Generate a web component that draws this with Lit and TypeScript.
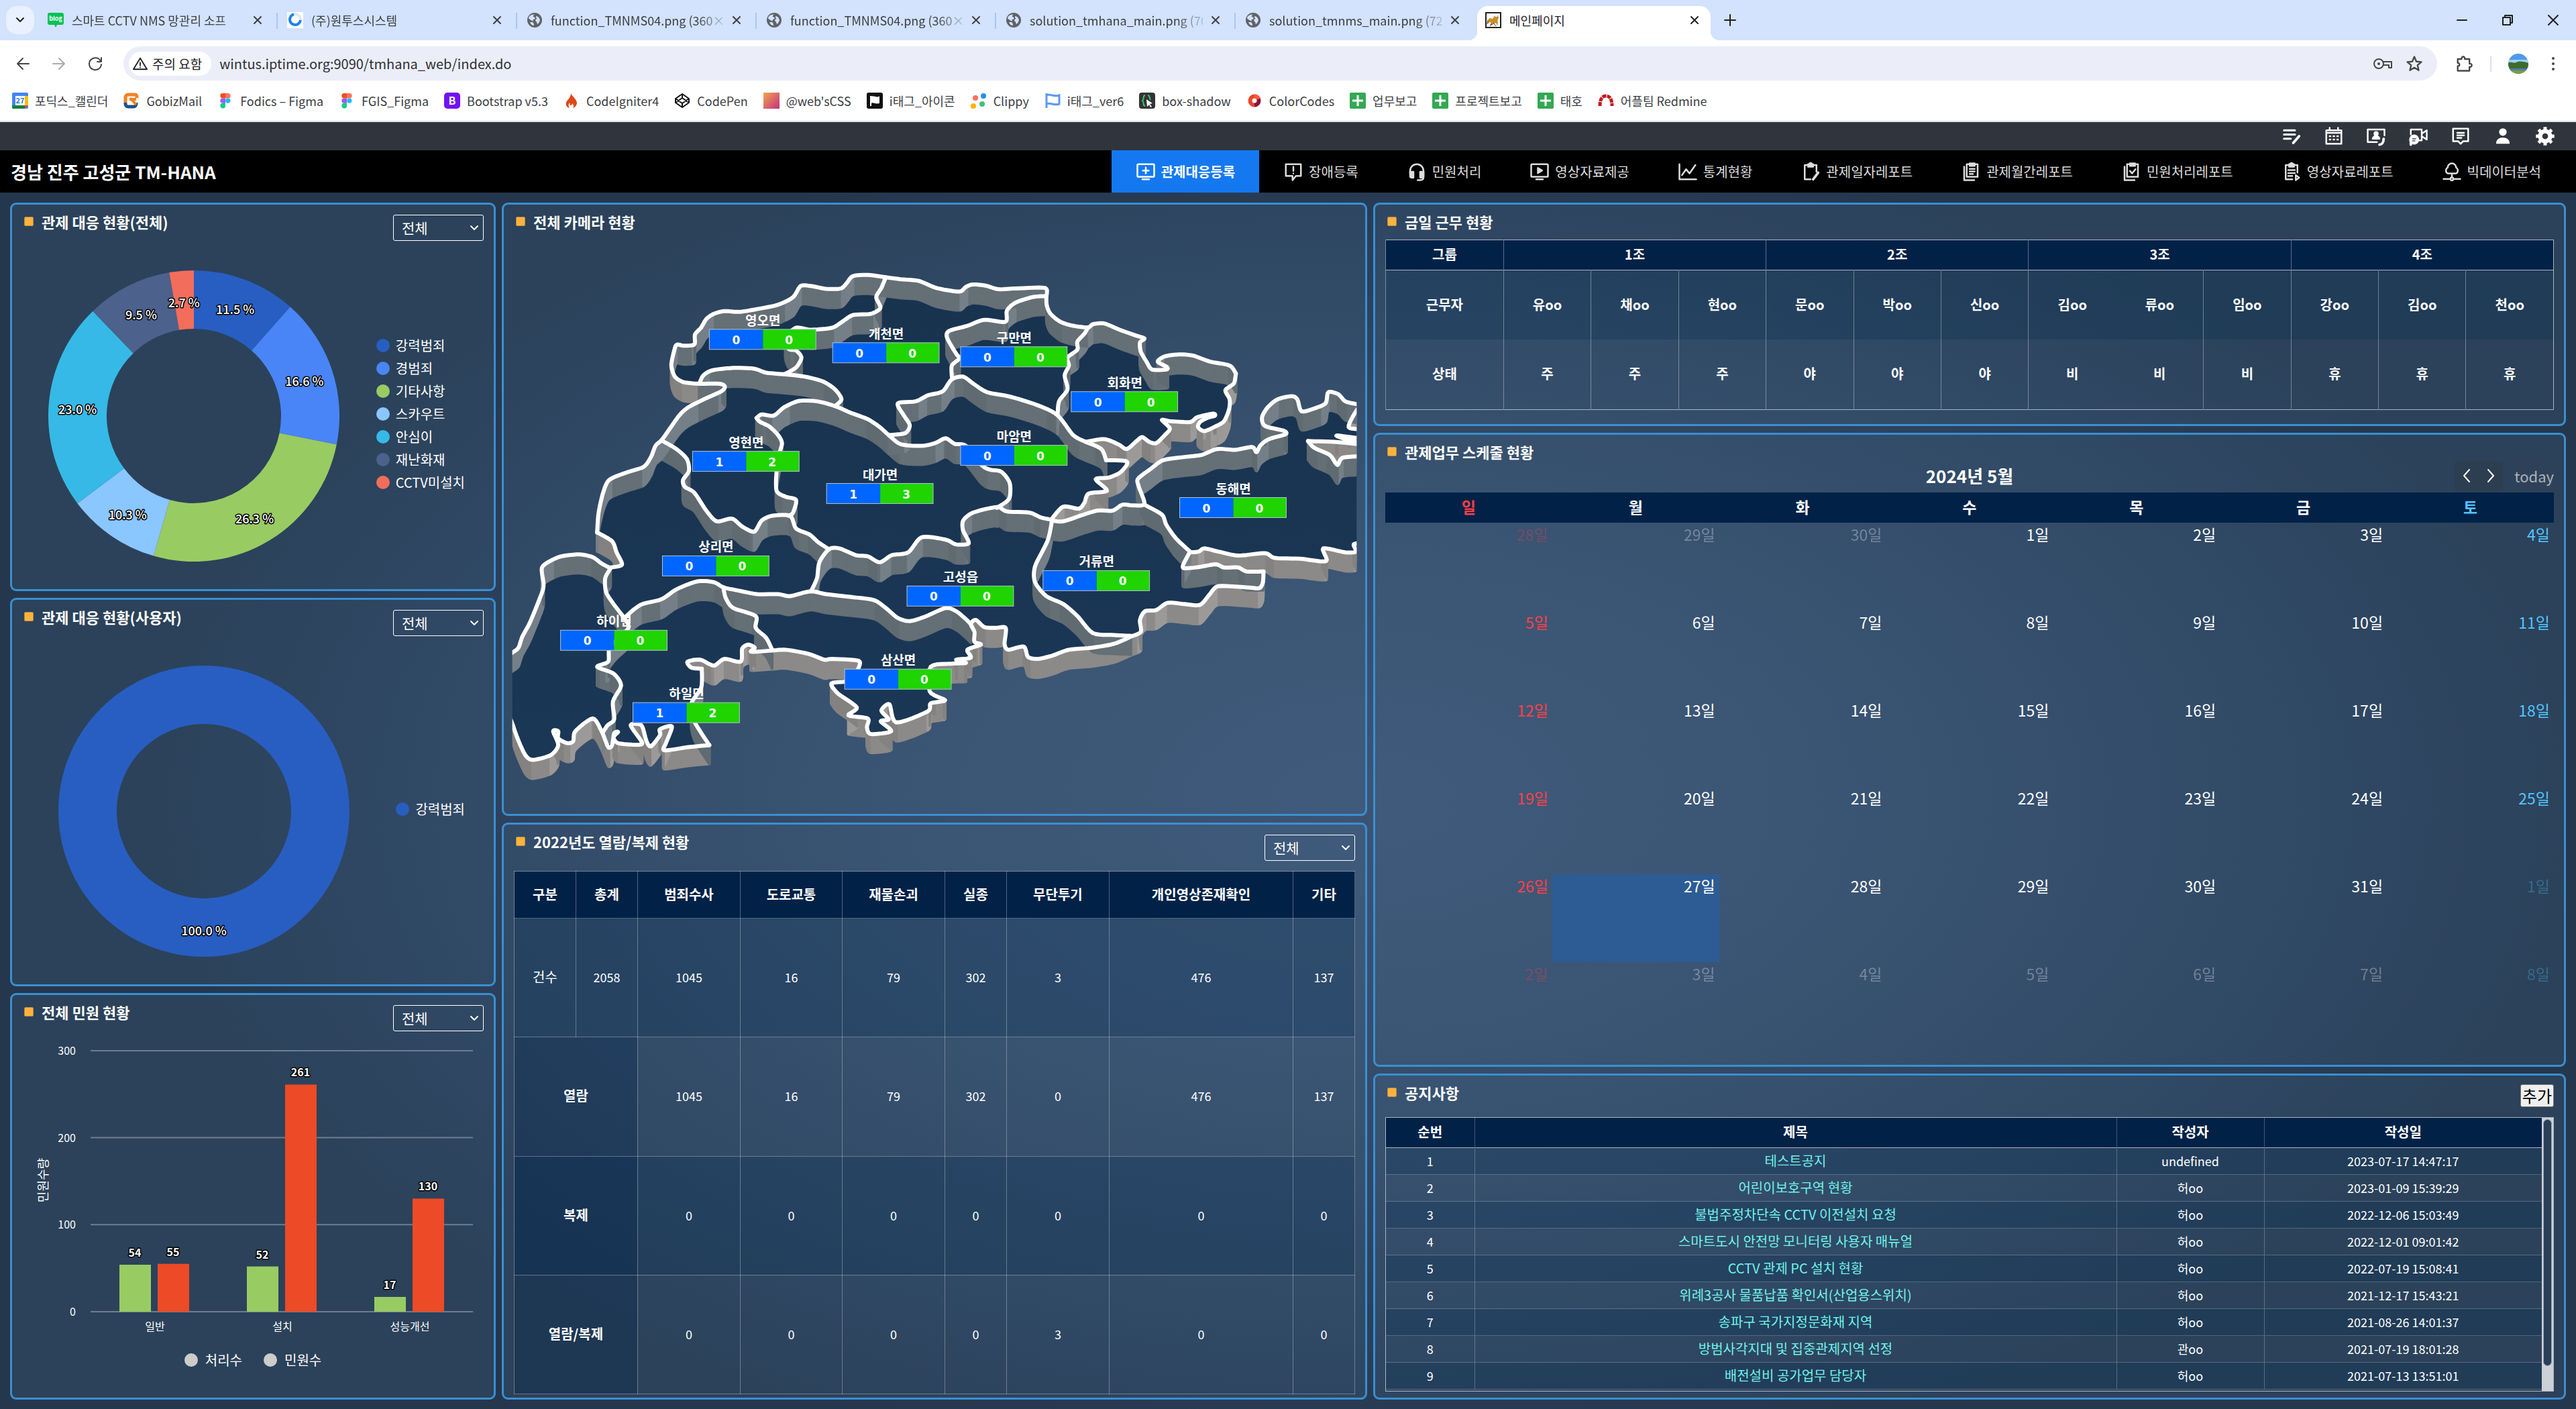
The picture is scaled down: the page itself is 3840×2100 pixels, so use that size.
import { LitElement, html, svg, css, nothing } from "lit";
import { customElement, property } from "lit/decorators.js";
import { classMap } from "lit/directives/class-map.js";

const base = css`
  * { box-sizing: border-box; }
  button, select, input { font: inherit; color: inherit; margin: 0; }
  a { color: inherit; text-decoration: none; }
  ul { list-style: none; margin: 0; padding: 0; }
  svg { display: block; }
  .icon { flex: none; fill: none; stroke: currentColor; stroke-width: 2; stroke-linecap: round; stroke-linejoin: round; }
  .solid { fill: currentColor; stroke: none; }
`;

/* ---------- Browser frame ---------- */

const globe = html`<svg class="fav" viewBox="0 0 24 24"><circle cx="12" cy="12" r="11" fill="#5f6368"/><path d="M12 3.500c-2 1-3 3-1 4 2 0 2 2 1 3-2 0-3 1-2 3l-3-1-4-3c0-3 3-6 9-6zM14 6c3 0 5 2 6 6-1 3-2 5-4 6-1-2 0-3-2-4-2-2 0-4 2-4-2-1-2-2-2-4zM8 15c2 0 3 2 3 5-3 0-5-2-6-5z" fill="#d3e2fd"/></svg>`;
const blog = html`<svg class="fav" viewBox="0 0 24 24"><path d="M3 1h18a3 3 0 0 1 3 3v12a3 3 0 0 1-3 3h-7l-2 4-2-4H3a3 3 0 0 1-3-3V4a3 3 0 0 1 3-3z" fill="#05c157"/><text x="12" y="13" text-anchor="middle" font-size="9" font-weight="700" fill="#fff">blog</text></svg>`;
const ring = html`<svg class="fav" viewBox="0 0 24 24"><rect width="24" height="24" fill="#fff"/><circle cx="12" cy="11" r="8" fill="none" stroke="#dfe9f6" stroke-width="4"/><path d="M10 3.300A8 8 0 1 0 19.900 12" fill="none" stroke="#1f83ee" stroke-width="4"/></svg>`;
const cat = html`<svg class="fav" viewBox="0 0 24 24"><rect x="1" y="1" width="22" height="22" fill="#fff" stroke="#222" stroke-width="2"/><path d="M4 17c-1-3 1-8 3-8 2 0 2 1 4 1l3-5 1 2h3l1-3 1 5-2 4 1 2-1 6-2-5-3 1-3 3-3-1 2-3-2-1z" fill="#c98f2c"/><path d="M4 12l-1 6m9-2l4 5m-9 0l3-4" stroke="#332" fill="none"/></svg>`;

const tabs = [
  { icon: blog, title: "스마트 CCTV NMS 망관리 소프" },
  { icon: ring, title: "(주)원투스시스템" },
  { icon: globe, title: "function_TMNMS04.png (360×" },
  { icon: globe, title: "function_TMNMS04.png (360×" },
  { icon: globe, title: "solution_tmhana_main.png (70" },
  { icon: globe, title: "solution_tmnms_main.png (720" },
  { icon: cat, title: "메인페이지", active: true },
];

const figma = html`<svg class="fav" viewBox="0 0 24 24"><path d="M12 1H8a3.700 3.700 0 0 0 0 7.400h4z" fill="#f24e1e"/><path d="M12 1h4a3.700 3.700 0 0 1 0 7.400h-4z" fill="#ff7262"/><path d="M12 8.400H8a3.700 3.700 0 0 0 0 7.400h4z" fill="#a259ff"/><circle cx="15.800" cy="12.100" r="3.700" fill="#1abcfe"/><path d="M8 15.800h4v3.600A3.800 3.800 0 1 1 8 15.800z" fill="#0acf83"/></svg>`;
const sheetIcon = html`<svg class="fav" viewBox="0 0 24 24"><rect width="24" height="24" rx="2" fill="#34a853"/><path d="M12 4v16M4 12h16" stroke="#fff" stroke-width="3"/></svg>`;
const bookmarks = [
  { label: "포딕스_캘린더", icon: html`<svg class="fav" viewBox="0 0 24 24"><rect width="24" height="24" rx="2" fill="#4285f4"/><path d="M19 5h5v14h-5z" fill="#fbbc04"/><path d="M0 19h19v5H2a2 2 0 0 1-2-2z" fill="#188038"/><path d="M19 19h5l-5 5z" fill="#ea4335"/><rect x="5" y="5" width="14" height="14" fill="#fff"/><text x="12" y="16" text-anchor="middle" font-size="11" font-weight="700" fill="#1a73e8">27</text></svg>` },
  { label: "GobizMail", icon: html`<svg class="fav" viewBox="0 0 24 24" fill="none" stroke-width="5"><path d="M20 8V6a3 3 0 0 0-3-3H7a4 4 0 0 0-4 4v8" stroke="#f58220"/><path d="M3 15v2a4 4 0 0 0 4 4h8a4 4 0 0 0 4-4v-2" stroke="#1c4f8f"/><path d="M9 10h10M10 8l9 10" stroke="#f58220" stroke-width="4"/></svg>` },
  { label: "Fodics – Figma", icon: figma },
  { label: "FGIS_Figma", icon: figma },
  { label: "Bootstrap v5.3", icon: html`<svg class="fav" viewBox="0 0 24 24"><rect width="24" height="24" rx="5" fill="#7311f0"/><text x="12" y="18" text-anchor="middle" font-size="16" font-weight="700" fill="#fff">B</text></svg>` },
  { label: "CodeIgniter4", icon: html`<svg class="fav" viewBox="0 0 24 24"><path d="M11 1c1 4 8 8 9 14 0 4-3 7-6 8 2-3 1-5-1-7 0 2-1 3-3 3-1-1 0-3-1-4-2 3-2 5 0 8-4-1-6-4-5-8 1-4 7-7 7-14z" fill="#dd4814"/></svg>` },
  { label: "CodePen", icon: html`<svg class="fav" viewBox="0 0 24 24" fill="none" stroke="#111" stroke-width="2"><path d="M12 2l10 7v6l-10 7-10-7V9zM2 9l10 7 10-7M2 15l10-7 10 7M12 2v6m0 8v6" stroke-linejoin="round"/></svg>` },
  { label: "@web'sCSS", icon: html`<svg class="fav" viewBox="0 0 24 24"><defs><linearGradient id="ws" x2="1" y2="1"><stop stop-color="#f4a550"/><stop offset="1" stop-color="#c3307c"/></linearGradient></defs><rect width="24" height="24" fill="url(#ws)"/></svg>` },
  { label: "i태그_아이콘", icon: html`<svg class="fav" viewBox="0 0 24 24"><rect width="24" height="24" rx="3" fill="#111"/><path d="M6 5v15M6 7c4-3 7 2 12 0v8c-5 2-8-3-12 0z" fill="#fff" stroke="#fff" stroke-width="2"/></svg>` },
  { label: "Clippy", icon: html`<svg class="fav" viewBox="0 0 24 24"><circle cx="7" cy="8" r="4" fill="#ff6f61"/><circle cx="19" cy="5" r="4" fill="#1e90ff"/><circle cx="17" cy="17" r="4" fill="#45c07a"/><circle cx="4" cy="20" r="4" fill="#ffb300"/></svg>` },
  { label: "i태그_ver6", icon: html`<svg class="fav" viewBox="0 0 24 24" fill="none" stroke="#5b9bf0" stroke-width="3"><path d="M3 1v22M3 4c6-3 11 3 19 0v13c-8 3-13-3-19 0"/></svg>` },
  { label: "box-shadow", icon: html`<svg class="fav" viewBox="0 0 24 24"><rect width="24" height="24" rx="4" fill="#333"/><path d="M9 4c-4 0-1 6-4 8 3 2 0 8 4 8M13 4c4 0 2 5 4 7" stroke="#3fbf72" stroke-width="2" fill="none"/><path d="M11 10l9 6-4 1 3 4-2 1-2-4-3 3z" fill="#fff"/></svg>` },
  { label: "ColorCodes", icon: html`<svg class="fav" viewBox="0 0 24 24" fill="none" stroke-width="6"><path d="M12 5.500a6.500 6.500 0 0 0 0 13" stroke="#e8472b"/><path d="M12 5.500a6.500 6.500 0 0 1 0 13" stroke="#8c1238"/><path d="M12 5.500a6.500 6.500 0 0 1 6 4" stroke="#ff5c35"/></svg>` },
  { label: "업무보고", icon: sheetIcon },
  { label: "프로젝트보고", icon: sheetIcon },
  { label: "태호", icon: sheetIcon },
  { label: "어플팀 Redmine", icon: html`<svg class="fav" viewBox="0 0 24 24" fill="none" stroke="#c3191f" stroke-width="5" stroke-dasharray="6 1"><path d="M3 20c0-8 2-15 9-15s9 7 9 15"/></svg>` },
];

@customElement("browser-frame")
export class BrowserFrame extends LitElement {
  static styles = [base, css`
    :host { display: block; color: #1f2023; font-size: 18px; line-height: 26px; }
    .fav { width: 24px; height: 24px; flex: none; }
    .strip { display: flex; height: 60px; background: #d3e2fd; padding-left: 9px; }
    .search { align-self: center; width: 42px; height: 42px; margin-right: 4px; border: 0; border-radius: 16px; background: #e9f1fe; display: grid; place-items: center; }
    .tab { flex: 0 1 357px; min-width: 0; display: flex; align-items: center; gap: 12px; padding: 0 21px 0 16px; position: relative; color: #3c4043; }
    .tab + .tab:not(.active)::before { content: ""; position: absolute; left: 0; top: 19px; height: 24px; width: 2px; background: #a8c7fa; }
    .tab-title { flex: 1; min-width: 0; white-space: nowrap; mask-image: linear-gradient(90deg, #000 84%, rgba(0, 0, 0, 0.2)); }
    .close { border: 0; background: none; padding: 0; }
    .active { margin: 9px 0 0 5px; flex-basis: 348px; padding: 0 17px 9px 12px; background: #fff; border-radius: 16px 16px 0 0; color: #1f2023; }
    .active .tab-title { mask-image: none; }
    .flare { position: absolute; bottom: 0; width: 13px; height: 13px; background: radial-gradient(circle at 0 0, transparent 13px, #fff 13px); left: -13px; }
    .flare.right { left: auto; right: -13px; background: radial-gradient(circle at 100% 0, transparent 13px, #fff 13px); }
    .plus { border: 0; background: none; padding: 0; margin-left: 19px; }
    .window { margin-left: auto; display: flex; align-items: center; gap: 50px; padding-right: 25px; }
    .window button { border: 0; background: none; padding: 0; }
    .toolbar { display: flex; align-items: center; height: 69px; background: #fff; padding: 0 22px; color: #474747; }
    .toolbar > button { border: 0; background: none; padding: 0; margin-right: 30px; }
    .toolbar > .faded { color: #aaa; }
    .address { flex: 1; height: 51px; display: flex; align-items: center; gap: 12px; border-radius: 26px; background: #ebeef8; padding: 0 20px 0 8px; }
    .chip { border: 0; background: #fff; height: 36px; border-radius: 18px; display: flex; align-items: center; gap: 7px; padding: 0 14px 0 6px; color: #1f2023; font-size: 19px; }
    .url { flex: 1; border: 0; background: none; outline: none; padding: 0; color: #303134; font-size: 20px; }
    .address > svg + svg { margin-left: 6px; }
    .tools { display: flex; align-items: center; gap: 25px; padding-left: 26px; }
    .rule { width: 2px; height: 24px; background: #d3e2fd; }
    .marks { display: flex; align-items: center; height: 53px; gap: 23px; padding: 0 18px 10px; background: #fff; border-bottom: 2px solid #dfe1e5; color: #3c4043; }
    .marks a { display: flex; align-items: center; gap: 10px; white-space: nowrap; }
  `];

  render() {
    const x = html`<svg class="icon" width="14" height="14" viewBox="0 0 14 14"><path d="M2 2l10 10M12 2L2 12"/></svg>`;
    return html`
      <div class="strip">
        <button class="search" aria-label="탭 검색"><svg class="icon" width="14" height="10" viewBox="0 0 14 10"><path d="M2 2l5 5 5-5"/></svg></button>
        ${tabs.map((t) => html`<div class=${classMap({ tab: true, active: !!t.active })}>
          ${t.active ? html`<span class="flare"></span><span class="flare right"></span>` : nothing}
          ${t.icon}<span class="tab-title">${t.title}</span><button class="close" aria-label="탭 닫기">${x}</button>
        </div>`)}
        <button class="plus" aria-label="새 탭"><svg class="icon" width="20" height="20" viewBox="0 0 20 20"><path d="M10 2v16M2 10h16"/></svg></button>
        <div class="window">
          <button aria-label="최소화"><svg class="icon" width="18" height="18" viewBox="0 0 18 18"><path d="M2 9h14"/></svg></button>
          <button aria-label="이전 크기로"><svg class="icon" width="18" height="18" viewBox="0 0 18 18"><path d="M2 5h11v11H2zM5 5V2h11v11h-3"/></svg></button>
          <button aria-label="닫기"><svg class="icon" width="18" height="18" viewBox="0 0 18 18"><path d="M2 2l14 14M16 2L2 16"/></svg></button>
        </div>
      </div>
      <div class="toolbar">
        <button aria-label="뒤로"><svg class="icon" width="24" height="24" viewBox="0 0 24 24"><path d="M21 12H4m8-8l-8 8 8 8"/></svg></button>
        <button class="faded" aria-label="앞으로"><svg class="icon" width="24" height="24" viewBox="0 0 24 24"><path d="M3 12h17m-8-8l8 8-8 8"/></svg></button>
        <button aria-label="새로고침"><svg class="icon" width="24" height="24" viewBox="0 0 24 24"><path d="M20 8a9 9 0 1 0 1 5M21 3v6h-6"/></svg></button>
        <div class="address">
          <button class="chip"><svg class="icon" width="22" height="22" viewBox="0 0 24 24"><path d="M12 3L1 21h22zM12 10v5m0 3v0"/></svg>주의 요함</button>
          <input class="url" aria-label="주소창" value="wintus.iptime.org:9090/tmhana_web/index.do" />
          <svg class="icon" width="30" height="24" viewBox="0 0 30 24"><circle cx="9" cy="12" r="7"/><circle cx="9" cy="12" r="2" class="solid"/><path d="M15 9h13v9h-4v-4h-8"/></svg>
          <svg class="icon" width="28" height="28" viewBox="0 0 24 24"><path d="M12 3l2.600 6.200 6.400.5-4.900 4.200 1.500 6.500L12 17l-5.600 3.400 1.500-6.500L3 9.700l6.400-.5z"/></svg>
        </div>
        <div class="tools">
          <svg class="icon" width="28" height="28" viewBox="0 0 24 24" stroke-width="3"><path d="M4 6h5c-1-4 5-4 4 0h6v6c4-1 4 5 0 4v5H4v-6c3 0 3-4 0-4z"/></svg>
          <span class="rule"></span>
          <svg width="30" height="30" viewBox="0 0 30 30"><defs><clipPath id="av"><circle cx="15" cy="15" r="15"/></clipPath></defs><g clip-path="url(#av)"><rect width="30" height="30" fill="#4a9be8"/><rect y="9" width="30" height="6" fill="#a5cff2"/><path d="M0 14c4-3 8 1 12-1s8-2 18 1v16H0z" fill="#3f6b2c"/><path d="M0 22h30v3H0z" fill="#4c7db5"/><path d="M0 25h30v5H0z" fill="#7da03c"/></g></svg>
          <svg class="solid" width="24" height="24" viewBox="0 0 24 24" fill="currentColor"><circle cx="12" cy="4" r="2"/><circle cx="12" cy="12" r="2"/><circle cx="12" cy="20" r="2"/></svg>
        </div>
      </div>
      <nav class="marks">${bookmarks.map((b) => html`<a href="#">${b.icon}${b.label}</a>`)}</nav>
    `;
  }
}

/* ---------- Panel ---------- */

@customElement("dash-panel")
export class DashPanel extends LitElement {
  @property() heading = "";
  @property({ type: Boolean }) filter = false;

  static styles = [base, css`
    :host { display: flex; flex-direction: column; min-width: 0; min-height: 0; border: 3px solid #3a8fd0; border-radius: 9px; background: rgba(90, 150, 190, 0.12); }
    .head { display: flex; align-items: flex-start; justify-content: space-between; padding: 13px 15px 0 18px; }
    .title { display: flex; align-items: center; gap: 12px; margin: 0; font-size: 22px; line-height: 24px; font-weight: 700; }
    .title::before { content: ""; width: 12px; height: 12px; background: #ffb23e; border: 1px solid #b98b45; border-radius: 2px; }
    .picker { display: grid; width: 135px; height: 39px; margin-top: 2px; }
    .picker > * { grid-area: 1 / 1; }
    .body { flex: 1; min-height: 0; display: flex; flex-direction: column; }
    select { appearance: none; border: 1px solid #fff; border-radius: 3px; background: transparent; color: #fff; padding: 0 12px 2px; font-size: 21px; }
    option { color: #000; }
    .picker svg { place-self: center end; margin-right: 6px; pointer-events: none; }
    ::slotted([slot="action"]) { margin-top: 2px; }
  `];

  render() {
    return html`
      <header class="head">
        <h2 class="title">${this.heading}</h2>
        ${this.filter ? html`<span class="picker">
          <select aria-label="${this.heading} 구분"><option>전체</option></select>
          <svg class="icon" width="16" height="12" viewBox="0 0 16 12"><path d="M3 3l5 5 5-5"/></svg>
        </span>` : nothing}
        <slot name="action"></slot>
      </header>
      <div class="body"><slot></slot></div>
    `;
  }
}

/* ---------- Donut chart ---------- */

type Slice = { name: string; value: number; color: string };

@customElement("donut-chart")
export class DonutChart extends LitElement {
  @property({ attribute: false }) slices: Slice[] = [];

  static styles = [base, css`
    :host { flex: 1; min-height: 0; display: flex; align-items: center; padding: 3px 43px 0 0; font-size: 20px; }
    .plot { flex: 1; min-width: 0; display: grid; place-items: center; }
    .plot svg { width: 434px; max-width: 100%; }
    .value { font-size: 18px; fill: #fff; stroke: #000; stroke-width: 3px; paint-order: stroke; stroke-linejoin: round; text-anchor: middle; font-weight: 500; }
    .legend { display: grid; gap: 10px; line-height: 24px; padding-bottom: 6px; }
    .legend li { display: flex; align-items: center; gap: 9px; }
    .dot { width: 20px; height: 20px; }
  `];

  render() {
    const total = this.slices.reduce((s, d) => s + d.value, 0);
    const at = (r: number, t: number) => [217 + r * Math.sin(t * 2 * Math.PI), 217 - r * Math.cos(t * 2 * Math.PI)];
    let from = 0;
    const parts = this.slices.map((d) => {
      const to = from + d.value / total;
      const mid = at(174, (from + to) / 2);
      const big = to - from > 0.5 ? 1 : 0;
      const [a, b, c, e] = [at(217, from), at(217, to), at(130, to), at(130, from)];
      const full = this.slices.length === 1;
      from = to;
      return {
        shape: full
          ? svg`<circle cx="217" cy="217" r="173.500" fill="none" stroke=${d.color} stroke-width="87"/>`
          : svg`<path fill=${d.color} d="M${a} A217 217 0 ${big} 1 ${b} L${c} A130 130 0 ${big} 0 ${e}Z"/>`,
        label: svg`<text class="value" x=${mid[0]} y=${mid[1] + 11}>${d.value.toFixed(1)} %</text>`,
      };
    });
    return html`
      <div class="plot"><svg viewBox="0 0 434 434">${parts.map((p) => p.shape)}${parts.map((p) => p.label)}</svg></div>
      <ul class="legend">${this.slices.map((d) => html`<li><svg class="dot" viewBox="0 0 20 20"><circle cx="10" cy="10" r="10" fill=${d.color}/></svg>${d.name}</li>`)}</ul>
    `;
  }
}

/* ---------- Bar chart ---------- */

const complaints = [
  { name: "일반", done: 54, all: 55 },
  { name: "설치", done: 52, all: 261 },
  { name: "성능개선", done: 17, all: 130 },
];

@customElement("bar-chart")
export class BarChart extends LitElement {
  static styles = [base, css`
    :host { flex: 1; min-height: 0; display: flex; flex-direction: column; font-size: 20px; line-height: 24px; }
    .plot { width: 100%; }
    text { font-size: 16px; fill: #fff; }
    .end { text-anchor: end; }
    .mid { text-anchor: middle; }
    .axis { font-size: 18px; }
    .count { font-weight: 700; stroke: #000; stroke-width: 3px; paint-order: stroke; stroke-linejoin: round; text-anchor: middle; }
    .grid { stroke: #6d7e90; stroke-width: 2; }
    .legend { display: flex; justify-content: center; gap: 32px; }
    .legend li { display: flex; align-items: center; gap: 11px; }
    .dot { width: 20px; height: 20px; border-radius: 50%; background: #ccc; }
  `];

  render() {
    const y = (v: number) => 423 - v * 1.297;
    const bar = (x: number, v: number, color: string) => svg`
      <rect x=${x} y=${y(v)} width="47" height=${423 - y(v)} fill=${color}/>
      <text class="count" x=${x + 23} y=${y(v) - 12}>${v}</text>`;
    return html`
      <svg class="plot" viewBox="0 5 718 478">
        ${[0, 100, 200, 300].map((v) => svg`
          <line class="grid" x1="117" x2="687" y1=${y(v)} y2=${y(v)}/>
          <text class="end" x="95" y=${y(v) + 6}>${v}</text>`)}
        <text class="mid axis" transform="translate(53 227) rotate(-90)">민원수량</text>
        ${complaints.map((c, i) => svg`
          ${bar(160 + i * 190, c.done, "#99cb63")}${bar(217 + i * 190, c.all, "#ed4a27")}
          <text class="mid" x=${213 + i * 190} y="451">${c.name}</text>`)}
      </svg>
      <ul class="legend"><li><span class="dot"></span>처리수</li><li><span class="dot"></span>민원수</li></ul>
    `;
  }
}

/* ---------- Region map ---------- */

type Pt = [number, number];

/* Survey points come on two sheets; each has its own origin and units per pixel. */
const sheets: Record<string, { x: number; kx: number }> = { W: { x: 740, kx: 2.24 }, E: { x: 1400, kx: 2.376 } };
const plot = (source: string): Pt[] => {
  let sheet = sheets.W;
  const out: Pt[] = [];
  for (const token of source.trim().split(/\s+/)) {
    if (sheets[token]) { sheet = sheets[token]; continue; }
    const [u, v] = token.split(",").map(Number);
    out.push([sheet.x + u / sheet.kx, 290 + v / 1.686]);
  }
  return out;
};

const smooth = (p: Pt[]): Pt[] => {
  const out: Pt[] = [];
  for (let i = 0; i < p.length - 1; i++) {
    const [a, b, c, d] = [p[i - 1] ?? p[i], p[i], p[i + 1], p[i + 2] ?? p[i + 1]];
    for (let s = 0; s < 6; s++) {
      const t = s / 6, t2 = t * t, t3 = t2 * t;
      const mix = (k: 0 | 1) => b[k] + 0.4 * (c[k] - a[k]) * (t3 - 2 * t2 + t) + (c[k] - b[k]) * (3 * t2 - 2 * t3) + 0.4 * (d[k] - b[k]) * (t3 - t2);
      out.push([mix(0), mix(1)]);
    }
  }
  out.push(p[p.length - 1]);
  return out;
};

const outline: { kind: "inner" | "coast"; at: string }[] = [
  { kind: "inner", at: "W 40,1158 52,1152 72,1140 85,1112 110,1077 140,1022 156,985 150,940 175,923 215,910 275,905 320,912 350,928 380,940" },
  { kind: "coast", at: "W 380,938 418,931 400,900 385,872 335,850" },
  { kind: "inner", at: "W 335,850 340,800 355,750 375,718 430,700 490,685 515,660 530,632 550,618 575,592 610,555 640,535 700,512 750,495 762,483 745,476 676,476" },
  { kind: "coast", at: "W 676,476 625,472 595,458 583,430 590,400" },
  { kind: "inner", at: "W 590,400 600,378 625,380 660,377 662,352 682,335 700,313 725,300 760,293 810,295 870,288 940,277 990,258 1015,230 1050,230 1100,237 1150,236 1170,222 1190,205 1240,202 1300,208 1350,213 1410,217 1470,235 1545,244 E 95,232 120,226 165,229 210,238 270,236 365,234 382,240 380,260 382,280 395,300 430,320 475,330 528,334 545,326 585,324 640,340 700,355 728,362 712,372 715,395 735,420 755,440 805,440 808,434 775,420 800,407 850,402 900,405 960,420 1030,430 1052,450" },
  { kind: "coast", at: "E 1052,450 1045,475 1015,492 1030,515 1028,540 1010,570 980,583 940,595 918,585 925,572 950,562 978,556 970,551 915,560 890,572 820,570 790,567 818,588 800,605 770,625 745,622 720,610 700,620 665,640 635,628 585,615 520,622" },
  { kind: "inner", at: "E 520,622 575,640 592,668" },
  { kind: "coast", at: "E 592,668 660,670 665,680 640,700 600,712 555,716 595,745 530,752 515,775 495,790 440,785 400,815" },
  { kind: "inner", at: "E 400,820 440,822 500,808 560,795 615,795 650,780 690,782 728,778 708,735 705,715 750,690 795,668 870,660 930,655 985,640 1050,642 1110,635 1125,648 1140,630 1170,615 1228,603 1222,594 1155,582 1145,560 1165,535 1200,515 1250,507 1270,515 1285,545 1330,538 1370,525 1380,497 1415,502 1440,520 1480,527 1500,529" },
  { kind: "coast", at: "E 1500,529 1478,545 1452,585 1500,592 1500,612 1410,606 1440,615 1500,628 1400,622 1308,620" },
  { kind: "inner", at: "E 1308,620 1330,637 1385,655 1412,680 1430,662 1500,658" },
  { kind: "coast", at: "E 1500,875 1470,880 1478,898 1440,900 1362,890 1372,922 1280,916 1190,914 1155,902 1060,908 990,898 940,890 920,898 888,900" },
  { kind: "inner", at: "E 888,900 865,932 870,940 920,937 980,930 1010,938 1060,938 1090,948 1150,948" },
  { kind: "coast", at: "E 1150,948 1148,975 1135,990 1090,988 990,985 960,1005 925,1032 870,1030 810,1027 770,1045 730,1048 712,1070 715,1100 680,1112 620,1130 540,1140 460,1145 400,1160 350,1168 315,1163 300,1137 245,1145 232,1130 236,1090 200,1090 160,1088 130,1070 112,1080 125,1100 125,1125 148,1132 100,1145 112,1165 60,1170 W 1568,1178 1520,1180 1450,1188 1447,1250 1498,1272 1450,1280 1440,1300 1335,1328 1312,1282 1285,1298 1310,1320 1283,1325 1318,1350 1250,1357 1237,1340 1240,1318 1175,1310 1203,1290 1140,1255 1118,1230 1165,1225 1190,1215 1212,1185 1205,1172 1120,1168 1095,1170 1040,1155 965,1145 920,1147 850,1150 862,1140 840,1132 820,1142 815,1175 760,1168 725,1185 680,1170 637,1175 650,1190 685,1193" },
  { kind: "inner", at: "W 685,1193 683,1240 650,1280 660,1325 710,1385" },
  { kind: "coast", at: "W 710,1385 640,1390 560,1398 565,1380 585,1338 545,1345 545,1360 515,1388 500,1375 483,1335 447,1335 485,1378 470,1384 405,1380 390,1365 405,1352 392,1355 385,1385 372,1390 350,1350 320,1318 262,1350 255,1375 235,1380 205,1368 205,1350 188,1350 205,1385 180,1410 120,1422 95,1410 70,1370 52,1332 40,1310" },
];

const borders = [
  "W 1300,208 1285,235 1268,258 1282,285 1250,300 1190,303 1150,322 1120,335 1050,340 1000,335 965,360 975,388 1000,392 1018,410 1000,435 960,452",
  "W 676,476 690,455 720,442 790,436 860,438 900,448 960,452 1030,458 1090,470 1130,490 1152,515 1130,532",
  "W 868,562 885,553 925,556 960,535 1010,519 1070,520 1130,532 1180,548 1240,565 1280,585 1310,605 1350,628 1420,632 1465,625 1500,613 E 55,627 95,632 150,680 180,692 220,697 250,725 248,765 205,788",
  "W 868,562 880,572 910,583 940,605 953,625 945,650 935,695 935,745 965,760 1000,768 990,800 975,808",
  "W 550,618 600,640 635,665 642,695 622,718 628,735 660,750 700,795 735,822 785,815 820,835 860,848 885,820 920,808 980,808 1000,840 1045,855 1075,875 1110,892",
  "W 1050,998 1070,965 1078,925 1110,892 1145,890 1200,907 1240,910 1280,925 1320,907 1375,900 1420,862 1500,868 E 60,880 105,877 85,845 85,820 120,800 205,786 240,797 320,800 360,812 400,818",
  "W 425,1065 480,1032 550,1018 600,993 670,973 725,975 757,988 800,995 870,1005 940,1005 980,1010 1048,998 1100,1005 1180,1012 1260,1020 1300,1040 1340,1065 1380,1073 1430,1062 1500,1040 E 60,1048 90,1065 112,1080",
  "W 380,940 362,965 365,1000 390,1030 425,1065 440,1090 400,1120 375,1145 372,1175 335,1188 390,1205 415,1235 388,1275 392,1320 370,1335 355,1352",
  "W 757,988 765,1015 790,1040 865,1060 865,1090 900,1115 920,1145",
  "E 380,255 330,258 270,272 240,292 235,320 160,315 100,330 35,343 28,360 60,400 72,412 45,430 45,458",
  "W 1310,605 1365,600 1380,580 1360,555 1340,525 1400,520 1440,505 1490,495 1520,465 E 85,458 120,475 170,497 250,508 350,530 420,555 475,605 520,622",
  "E 528,334 515,350 490,370 490,390 455,410 460,430 445,455 455,490 425,520 420,555",
  "E 400,820 385,870 340,935 340,975 380,1010 440,1030 490,1060 545,1103 620,1108 680,1110",
  "E 728,780 790,805 805,830 840,865 888,897",
];

const places: [string, number, number, number, number][] = [
  ["영오면", 1057, 491, 0, 0], ["개천면", 1241, 511, 0, 0], ["구만면", 1432, 517, 0, 0], ["회화면", 1597, 584, 0, 0],
  ["영현면", 1032, 673, 1, 2], ["마암면", 1432, 664, 0, 0], ["대가면", 1232, 721, 1, 3], ["동해면", 1759, 742, 0, 0],
  ["상리면", 987, 829, 0, 0], ["거류면", 1555, 851, 0, 0], ["고성읍", 1352, 874, 0, 0], ["하이면", 835, 940, 0, 0],
  ["삼산면", 1259, 998, 0, 0], ["하일면", 943, 1048, 1, 2],
];

const WALL = 28;
const tones = { inner: ["#656f76", "#757f87", "#5f6a71"], coast: ["#8b8a89", "#9c9a98", "#838281"] };

@customElement("region-map")
export class RegionMap extends LitElement {
  static styles = [base, css`
    :host { flex: 1; min-height: 0; display: block; padding: 0 12px; }
    .map { width: 100%; height: 100%; }
    .line { fill: none; stroke: #fff; stroke-width: 6; stroke-linejoin: round; stroke-linecap: round; }
    text { fill: #fff; font-weight: 700; text-anchor: middle; }
    .name { font-size: 19px; }
    .num { font-family: "DejaVu Sans", sans-serif; font-size: 17px; }
    .blue { fill: #0066ff; }
    .green { fill: #1fd400; }
    .frame { fill: none; stroke: #b4c3cf; }
  `];

  private walls(points: Pt[], kind: "inner" | "coast") {
    const parts = ["", "", ""];
    for (let i = 1; i < points.length; i++) {
      let [a, b] = [points[i - 1], points[i]];
      if (a[0] > b[0]) [a, b] = [b, a];
      const slope = (b[1] - a[1]) / Math.max(b[0] - a[0], 1);
      const tone = slope < -0.5 ? 1 : slope > 0.5 ? 2 : 0;
      parts[tone] += `M${a[0].toFixed(1)} ${a[1].toFixed(1)}L${b[0].toFixed(1)} ${b[1].toFixed(1)}v${WALL}L${a[0].toFixed(1)} ${(a[1] + WALL).toFixed(1)}z`;
    }
    return parts.map((d, i) => svg`<path d=${d} fill=${tones[kind][i]} stroke=${tones[kind][i]} stroke-width="4" stroke-linejoin="round"/>`);
  }

  render() {
    const path = (p: Pt[]) => "M" + p.map((q) => `${q[0].toFixed(1)} ${q[1].toFixed(1)}`).join("L");
    const edge = outline.map((o) => ({ kind: o.kind, pts: smooth(plot(o.at)) }));
    const inner = borders.map((b) => smooth(plot(b)));
    return html`<svg class="map" viewBox="763 342 1260 872">
      <defs>
        <clipPath id="sheet"><rect x="763" y="342" width="1260" height="872"/></clipPath>
        <linearGradient id="land" x2="0" y2="1"><stop stop-color="#18334f"/><stop offset="1" stop-color="#1b3756"/></linearGradient>
      </defs>
      <g clip-path="url(#sheet)">
        ${edge.filter((e) => e.kind === "coast").map((e) => this.walls(e.pts, e.kind))}
        <path d="${path(edge.flatMap((e) => e.pts))}Z" fill="url(#land)"/>
        ${inner.map((p) => this.walls(p, "inner"))}
        ${edge.filter((e) => e.kind === "inner").map((e) => this.walls(e.pts, e.kind))}
        ${inner.map((p) => svg`<path class="line" d=${path(p)}/>`)}
        ${edge.map((e) => svg`<path class="line" d=${path(e.pts)}/>`)}
      </g>
      ${places.map(([name, x, y, a, b]) => svg`<g>
        <text class="name" x=${x + 80} y=${y - 6}>${name}</text>
        <rect class="blue" x=${x} y=${y} width="80" height="30"/>
        <rect class="green" x=${x + 80} y=${y} width="79" height="30"/>
        <rect class="frame" x=${x} y=${y} width="159" height="30"/>
        <text class="num" x=${x + 40} y=${y + 22}>${a}</text>
        <text class="num" x=${x + 119} y=${y + 22}>${b}</text>
      </g>`)}
    </svg>`;
  }
}

/* ---------- Page ---------- */

const monitor = svg`<path d="M3 3h18a1 1 0 0 1 1 1v13a1 1 0 0 1-1 1H3a1 1 0 0 1-1-1V4a1 1 0 0 1 1-1zM8 21h8"/>`;
const board = svg`<path d="M9 4H5v17h7M15 4h4v8"/><path d="M9 6h6V3h-1.500a1.500 1.500 0 0 0-3 0H9z" fill="currentColor"/>`;
const stacked = svg`<path d="M10 3H7v15h13V3h-3M4 6v16h12"/><path d="M10.500 5h6V2h-6z" fill="currentColor"/>`;
const menu = [
  { label: "관제대응등록", icon: svg`${monitor}<path d="M12 7v7m-3.500-3.500h7"/>`, active: true },
  { label: "장애등록", icon: svg`<path d="M3 3h18v14h-6l-4 5v-5H3zM12 6v5m0 3v0"/>` },
  { label: "민원처리", icon: svg`<path d="M4 14v-3a8 8 0 0 1 16 0v8c0 2-2 3-5 3h-2"/><path d="M4 12h4v7H6a2 2 0 0 1-2-2zM20 12h-4v7h2a2 2 0 0 0 2-2z" fill="currentColor"/>` },
  { label: "영상자료제공", icon: svg`${monitor}<path d="M10 7.500v6l5-3z" fill="currentColor"/>` },
  { label: "통계현황", icon: svg`<path d="M2 3v18h20M5 16l5-7 4 5 7-10"/>` },
  { label: "관제일자레포트", icon: svg`${board}<path d="M15 21l6-8" stroke-width="3"/>` },
  { label: "관제월간레포트", icon: svg`${stacked}<path d="M10.500 8.500h6m-6 3h6m-6 3h4"/>` },
  { label: "민원처리레포트", icon: svg`${stacked}<path d="M10.500 11l2.500 3 4-5"/>` },
  { label: "영상자료레포트", icon: svg`<path d="M9 4H5v17h8M15 4h4v9"/><path d="M9 6h6V3h-1.500a1.500 1.500 0 0 0-3 0H9z" fill="currentColor"/><path d="M8 10h8m-8 3.500h8M8 17h5m4-1l4 3-4 3z"/>` },
  { label: "빅데이터분석", icon: svg`<path d="M7 14a4 4 0 0 1 0-7 5 5 0 0 1 10 0 4 4 0 0 1 0 7zM12 14v5M2 20.500h7m6 0h7"/><circle cx="12" cy="20.500" r="1.700"/>` },
];

const shortcuts = [
  { label: "일지", icon: svg`<path d="M3 5h13M3 10h13M3 15h8" stroke-width="2.500"/><path d="M14 20l7-8" stroke-width="3"/>` },
  { label: "일정", icon: svg`<path d="M3 5h18v16H3zM3 8h18M7 2v3m10-3v3"/><path d="M7 12h1m3.500 0h1m3.500 0h1M7 16h1m3.500 0h1m3.500 0h1"/>` },
  { label: "연락처", icon: svg`<path d="M13 19H2V4h20v7"/><circle cx="12" cy="9" r="2" fill="currentColor"/><path d="M8 15c0-4 8-4 8 0z" fill="currentColor"/><path d="M16 22c3 0 5-3 5-7" stroke-width="3"/>` },
  { label: "영상", icon: svg`<path d="M3 10V4h13v13h-4M16 9l6-4v11l-6-4"/><circle cx="7" cy="16" r="5" fill="currentColor"/><path d="M3 22v-4" stroke-width="3"/><path d="M5 15h4m-4 2.500h3" stroke="#30353d" stroke-width="1"/>` },
  { label: "메시지", icon: svg`<path d="M3 3h18v15h-6l-3 3-3-3H3zM8 8h8m-8 3h8m-8 3h5"/>` },
  { label: "사용자", icon: svg`<circle cx="12" cy="7" r="4.500" fill="currentColor" stroke="none"/><path d="M4 21c-1-10 17-10 16 0z" fill="currentColor" stroke="none"/>` },
  { label: "설정", icon: svg`<circle cx="12" cy="12" r="6" stroke-width="5"/><path d="M12 1v4m0 14v4M1 12h4m14 0h4M4.200 4.200L7 7m10 10l2.800 2.800M4.200 19.800L7 17M17 7l2.800-2.800" stroke-width="4" stroke-linecap="butt"/>` },
];

const crimes: Slice[] = [
  { name: "강력범죄", value: 11.5, color: "#285ec1" },
  { name: "경범죄", value: 16.6, color: "#4985f6" },
  { name: "기타사항", value: 26.3, color: "#99cb63" },
  { name: "스카우트", value: 10.3, color: "#8ac6ff" },
  { name: "안심이", value: 23.0, color: "#36b9e6" },
  { name: "재난화재", value: 9.5, color: "#4c618c" },
  { name: "CCTV미설치", value: 2.7, color: "#f36d5b" },
];
const mine: Slice[] = [{ name: "강력범죄", value: 100, color: "#285ec1" }];

const viewCols = [92, 92, 153, 152, 153, 92, 153, 274, 92];
const viewHead = ["구분", "총계", "범죄수사", "도로교통", "재물손괴", "실종", "무단투기", "개인영상존재확인", "기타"];
const viewRows = [
  { name: "열람", v: [1045, 16, 79, 302, 0, 476, 137] },
  { name: "복제", v: [0, 0, 0, 0, 0, 0, 0] },
  { name: "열람/복제", v: [0, 0, 0, 0, 3, 0, 0] },
];

const workers = ["유", "채", "현", "문", "박", "신", "김", "류", "임", "강", "김", "천"];
const states = ["주", "주", "주", "야", "야", "야", "비", "비", "비", "휴", "휴", "휴"];

const notices = [
  ["테스트공지", "undefined", "2023-07-17 14:47:17"],
  ["어린이보호구역 현황", "허oo", "2023-01-09 15:39:29"],
  ["불법주정차단속 CCTV 이전설치 요청", "허oo", "2022-12-06 15:03:49"],
  ["스마트도시 안전망 모니터링 사용자 매뉴얼", "허oo", "2022-12-01 09:01:42"],
  ["CCTV 관제 PC 설치 현황", "허oo", "2022-07-19 15:08:41"],
  ["위례3공사 물품납품 확인서(산업용스위치)", "허oo", "2021-12-17 15:43:21"],
  ["송파구 국가지정문화재 지역", "허oo", "2021-08-26 14:01:37"],
  ["방범사각지대 및 집중관제지역 선정", "관oo", "2021-07-19 18:01:28"],
  ["배전설비 공가업무 담당자", "허oo", "2021-07-13 13:51:01"],
];

@customElement("app-root")
export class AppRoot extends LitElement {
  static styles = [base, css`
    :host { display: flex; flex-direction: column; height: 100vh; overflow: hidden; color: #fff; font-family: "Noto Sans CJK KR", "Noto Sans", sans-serif; font-size: 20px; line-height: 26px; background: #25374d; }
    .shortcuts { flex: none; height: 42px; background: #30353d; display: flex; justify-content: flex-end; align-items: center; gap: 33px; padding-right: 31px; }
    .shortcuts button { border: 0; background: none; padding: 0; }
    .top { flex: none; height: 63px; background: #000; display: flex; align-items: center; justify-content: space-between; padding: 0 16px; }
    .brand { margin: 0; font-size: 26px; font-weight: 700; line-height: 36px; }
    .menu { display: flex; align-self: stretch; }
    .menu a { display: flex; align-items: center; gap: 8px; padding: 0 36px; color: #ddd; }
    .menu .active { background: #1479f0; color: #fff; font-weight: 700; }

    main { flex: 1; min-height: 0; display: grid; grid-template: minmax(0, 1fr) / minmax(0, 724fr) minmax(0, 1290fr) minmax(0, 1778fr); gap: 9px; padding: 15px 15px 14px; background: radial-gradient(ellipse 47% 56% at 53% 50%, #3d5373, #364c69 40%, #2c405b 75%, #25374d); }
    .column { display: grid; gap: 10px; min-height: 0; }
    .left { grid-template-rows: minmax(0, 579fr) minmax(0, 579fr) minmax(0, 606fr); }
    .center { grid-template-rows: minmax(0, 914fr) minmax(0, 860fr); }
    .right { grid-template-rows: minmax(0, 333fr) minmax(0, 946fr) minmax(0, 487fr); }

    table { width: 100%; height: 100%; border-collapse: collapse; table-layout: fixed; text-align: center; }
    th, td { padding: 0 0 2px; }
    thead th { background: #012147; }
    .views, .duty, .calendar { flex: 1; min-height: 0; }
    .views { padding: 15px 15px 5px; }
    .views table, .duty table { border: 1px solid #aab4c0; }
    .views th, .views td { border: 1px solid rgba(255, 255, 255, 0.3); }
    .views td { font-size: 18px; }
    .views thead tr { height: 70px; }
    .views tbody tr { height: 177px; }
    .views .label { font-size: 20px; }
    .views tbody th { background: rgba(0, 30, 70, 0.3); }
    .shade { background: rgba(0, 40, 80, 0.24); }

    .duty { padding: 15px 15px 21px; }
    .duty thead tr { height: 45px; border-bottom: 1px solid #aab4c0; }
    .duty th, .duty td { border-left: 1px solid rgba(255, 255, 255, 0.35); font-weight: 700; }
    .duty .joined { border-left: 0; }

    .calendar { display: flex; flex-direction: column; padding: 0 15px 22px; }
    .bar { display: grid; grid-template-columns: 1fr auto 1fr; align-items: center; height: 49px; flex: none; }
    .month { grid-column: 2; margin: 0; font-size: 26px; line-height: 32px; }
    .pager { justify-self: end; display: flex; gap: 17px; }
    .steps { display: flex; background: #2c3e50; border-radius: 4px; }
    .steps button { border: 0; background: none; width: 36px; height: 45px; padding: 0; display: grid; place-items: center; }
    .today { border: 0; background: #2f4158; border-radius: 4px; height: 45px; padding: 0; color: #a9b2bc; font-size: 22px; }
    .days { flex: 1; min-height: 0; font-size: 23px; }
    .days thead tr { height: 45px; }
    .days td { vertical-align: top; text-align: right; padding: 4px 6px 0 0; }
    .sun { color: #ff4048; }
    .sat { color: #55c4ff; }
    .out { opacity: 0.3; }
    .now { background: #2d5c95; }

    .add { border: 1px solid #777; border-radius: 3px; background: #efefef; color: #000; height: 34px; padding: 0 2px; font-size: 24px; line-height: 30px; }
    .notices { flex: 1; min-height: 0; display: flex; margin: 15px 15px 9px; border: 1px solid #aab4c0; overflow: hidden; }
    .notices table { height: auto; flex: 1; align-self: flex-start; }
    .notices thead tr { height: 45px; border-bottom: 1px solid #aab4c0; }
    .notices tbody tr { height: 40px; border-bottom: 1px solid rgba(255, 255, 255, 0.22); }
    .notices tbody tr:nth-child(odd) { background: rgba(0, 40, 80, 0.24); }
    .notices th + th, .notices td + td { border-left: 1px solid rgba(255, 255, 255, 0.25); }
    .notices td { font-size: 18px; }
    .notices .subject { font-size: 20px; color: #6ff3ea; }
    .w-no { width: 132px; }
    .w-who { width: 220px; }
    .w-when { width: 414px; }
    .scroll { flex: none; width: 17px; background: #ccd0d7; padding: 2px 2px 37px; display: flex; }
    .thumb { flex: 1; background: #2b3f57; border: 1px solid #9aa5b2; border-radius: 7px; }
  `];

  private dayCell(row: number, col: number) {
    const n = row * 7 + col - 2;
    const day = n < 1 ? n + 30 : n > 31 ? n - 31 : n;
    const tone = classMap({ sun: col === 0, sat: col === 6, out: n < 1 || n > 31 });
    return html`<td class=${n === 27 ? "now" : ""}><span class=${tone}>${day}일</span></td>`;
  }

  render() {
    const icon = (body: unknown, size = 30) => html`<svg class="icon" width=${size} height=${size} viewBox="0 0 24 24">${body}</svg>`;
    return html`
      <browser-frame></browser-frame>
      <div class="shortcuts">${shortcuts.map((s) => html`<button aria-label=${s.label}>${icon(s.icon)}</button>`)}</div>
      <header class="top">
        <h1 class="brand">경남 진주 고성군 TM-HANA</h1>
        <nav class="menu">${menu.map((m) => html`<a href="#" class=${m.active ? "active" : ""}>${icon(m.icon)}${m.label}</a>`)}</nav>
      </header>
      <main>
        <div class="column left">
          <dash-panel heading="관제 대응 현황(전체)" filter><donut-chart .slices=${crimes}></donut-chart></dash-panel>
          <dash-panel heading="관제 대응 현황(사용자)" filter><donut-chart .slices=${mine}></donut-chart></dash-panel>
          <dash-panel heading="전체 민원 현황" filter><bar-chart></bar-chart></dash-panel>
        </div>
        <div class="column center">
          <dash-panel heading="전체 카메라 현황"><region-map></region-map></dash-panel>
          <dash-panel heading="2022년도 열람/복제 현황" filter>
            <div class="views"><table>
              <colgroup>${viewCols.map((w) => html`<col style="width:${(w / 12.53).toFixed(2)}%" />`)}</colgroup>
              <thead><tr>${viewHead.map((h) => html`<th>${h}</th>`)}</tr></thead>
              <tbody>
                <tr class="shade"><td class="label">건수</td><td>2058</td>${[1045, 16, 79, 302, 3, 476, 137].map((v) => html`<td>${v}</td>`)}</tr>
                ${viewRows.map((r, i) => html`<tr class=${i === 1 ? "shade" : ""}><th colspan="2">${r.name}</th>${r.v.map((v) => html`<td>${v}</td>`)}</tr>`)}
              </tbody>
            </table></div>
          </dash-panel>
        </div>
        <div class="column right">
          <dash-panel heading="금일 근무 현황">
            <div class="duty"><table>
              <colgroup><col style="width:10.1%" />${workers.map(() => html`<col />`)}</colgroup>
              <thead><tr><th>그룹</th>${[1, 2, 3, 4].map((n) => html`<th colspan="3">${n}조</th>`)}</tr></thead>
              <tbody>
                <tr class="shade"><th>근무자</th>${workers.map((w, i) => html`<td class=${i === 7 ? "joined" : ""}>${w}oo</td>`)}</tr>
                <tr><th>상태</th>${states.map((s, i) => html`<td class=${i === 7 ? "joined" : ""}>${s}</td>`)}</tr>
              </tbody>
            </table></div>
          </dash-panel>
          <dash-panel heading="관제업무 스케줄 현황">
            <div class="calendar">
              <div class="bar">
                <h3 class="month">2024년 5월</h3>
                <div class="pager">
                  <span class="steps">
                    <button aria-label="이전 달"><svg class="icon" width="14" height="24" viewBox="0 0 14 24"><path d="M11 3l-8 9 8 9"/></svg></button>
                    <button aria-label="다음 달"><svg class="icon" width="14" height="24" viewBox="0 0 14 24"><path d="M3 3l8 9-8 9"/></svg></button>
                  </span>
                  <button class="today">today</button>
                </div>
              </div>
              <div class="days"><table>
                <thead><tr>${["일", "월", "화", "수", "목", "금", "토"].map((d, i) => html`<th class=${i === 0 ? "sun" : i === 6 ? "sat" : ""}>${d}</th>`)}</tr></thead>
                <tbody>${[0, 1, 2, 3, 4, 5].map((r) => html`<tr>${[0, 1, 2, 3, 4, 5, 6].map((c) => this.dayCell(r, c))}</tr>`)}</tbody>
              </table></div>
            </div>
          </dash-panel>
          <dash-panel heading="공지사항">
            <button class="add" slot="action">추가</button>
            <div class="notices">
              <table>
                <thead><tr><th class="w-no">순번</th><th>제목</th><th class="w-who">작성자</th><th class="w-when">작성일</th></tr></thead>
                <tbody>${notices.map(([title, who, when], i) => html`<tr><td>${i + 1}</td><td class="subject"><a href="#">${title}</a></td><td>${who}</td><td>${when}</td></tr>`)}</tbody>
              </table>
              <div class="scroll"><div class="thumb"></div></div>
            </div>
          </dash-panel>
        </div>
      </main>
    `;
  }
}
